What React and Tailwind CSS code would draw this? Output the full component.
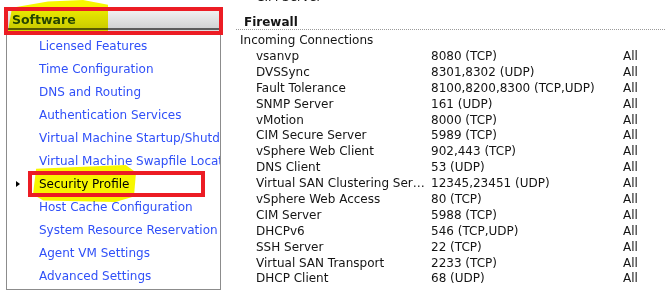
import React from 'react';

const navItems = [
  'Licensed Features',
  'Time Configuration',
  'DNS and Routing',
  'Authentication Services',
  'Virtual Machine Startup/Shutdown',
  'Virtual Machine Swapfile Location',
  'Security Profile',
  'Host Cache Configuration',
  'System Resource Reservation',
  'Agent VM Settings',
  'Advanced Settings',
];

const rules = [
  ['vsanvp', '8080 (TCP)'],
  ['DVSSync', '8301,8302 (UDP)'],
  ['Fault Tolerance', '8100,8200,8300 (TCP,UDP)'],
  ['SNMP Server', '161 (UDP)'],
  ['vMotion', '8000 (TCP)'],
  ['CIM Secure Server', '5989 (TCP)'],
  ['vSphere Web Client', '902,443 (TCP)'],
  ['DNS Client', '53 (UDP)'],
  ['Virtual SAN Clustering Service', '12345,23451 (UDP)'],
  ['vSphere Web Access', '80 (TCP)'],
  ['CIM Server', '5988 (TCP)'],
  ['DHCPv6', '546 (TCP,UDP)'],
  ['SSH Server', '22 (TCP)'],
  ['Virtual SAN Transport', '2233 (TCP)'],
  ['DHCP Client', '68 (UDP)'],
];

function SideNav() {
  return (
    <div className="relative w-[236px] shrink-0 flex flex-col pt-[11px]">
      {/* Software header bar */}
      <div className="ml-[8px] w-[211px] h-[20px] flex flex-col">
        <div className="h-[17px] bg-gradient-to-b from-[#f0f0f0] to-[#d2d3d4] pl-[4px] text-[12.5px] leading-[18px] font-bold text-[#27470a]">
          Software
        </div>
        <div className="h-[2px] bg-[#5c5c5c]" />
        <div className="h-[1px] bg-[#dcdcdc]" />
      </div>

      {/* Items */}
      <div className="mt-[4px] ml-[6px] w-[215px] flex-1 border-x border-b border-[#8c8c8c] overflow-hidden whitespace-nowrap">
        {navItems.map((item) => (
          <div
            key={item}
            className={`relative h-[23px] leading-[22px] pl-[32px] text-[12px] ${item === 'Security Profile' ? 'text-black' : 'text-[#3050f8]'}`}
          >
            {item === 'Security Profile' && (
              <span className="absolute left-[9px] top-[8px] w-0 h-0 border-y-[3.5px] border-y-transparent border-l-[4px] border-l-black" />
            )}
            {item}
          </div>
        ))}
      </div>

      {/* highlighter marks */}
      <div className="absolute left-[8px] top-0 w-[100px] h-[31px] bg-[#f7f700] mix-blend-multiply [clip-path:polygon(4%_25%,40%_5%,75%_0%,100%_15%,100%_100%,0%_100%)]" />
      <div className="absolute left-[33px] top-[165px] w-[103px] h-[37px] bg-[#f7f700] mix-blend-multiply [clip-path:polygon(3%_10%,90%_0%,100%_20%,98%_85%,80%_100%,10%_96%,0%_80%)]" />

      {/* red boxes */}
      <div className="absolute left-[4px] top-[7px] w-[219px] h-[28px] border-4 border-[#ec1c24]" />
      <div className="absolute left-[28px] top-[171px] w-[177px] h-[26px] border-4 border-[#ec1c24]" />
    </div>
  );
}

function FirewallPanel() {
  return (
    <div className="flex-1 flex flex-col -mt-[11px] text-[12px] text-[#141414] whitespace-nowrap">
      <div className="h-[16px] leading-[16px] pl-[20px]">CIM Server</div>
      <div className="h-[25px] pt-[9px] pl-[8px] leading-[16px] font-bold border-b border-dotted border-[#9a9a9a]">
        Firewall
      </div>
      <div className="h-[19px] pt-[2px] pl-[4px] leading-[16px]">Incoming Connections</div>
      {rules.map(([name, port]) => (
        <div key={name} className="flex h-[15.9px] leading-[15.9px] pl-[20px]">
          <div className="w-[175px] pr-[4px] overflow-hidden text-ellipsis">{name}</div>
          <div className="w-[192px]">{port}</div>
          <div>All</div>
        </div>
      ))}
    </div>
  );
}

export default function App() {
  return (
    <div className="w-[665px] h-[290px] bg-white flex overflow-hidden font-['DejaVu_Sans',sans-serif]">
      <SideNav />
      <FirewallPanel />
    </div>
  );
}
